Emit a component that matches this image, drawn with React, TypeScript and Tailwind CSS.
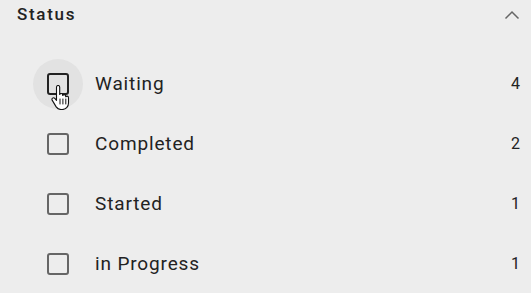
const items = [
  { label: "Waiting", count: 4, hover: true },
  { label: "Completed", count: 2 },
  { label: "Started", count: 1 },
  { label: "in Progress", count: 1 },
];

const HandCursor = () => (
  <svg
    className="absolute left-[18px] top-[26px] w-[19px] h-[25px]"
    viewBox="0 0 19 25"
    fill="none"
  >
    <path
      d="M5.5 2.2c0-1 .7-1.7 1.6-1.7s1.6.7 1.6 1.7v7.3c.3-.7.9-1 1.5-1 .9 0 1.5.7 1.5 1.6v.4c.3-.6.9-.9 1.5-.9.9 0 1.5.7 1.5 1.6v.6c.3-.4.8-.7 1.3-.7.9 0 1.5.7 1.5 1.6v5.2c0 3.8-2.6 6.6-6.3 6.6H10c-2.2 0-3.6-.9-4.8-2.6L1.3 15.4c-.6-.8-.4-1.8.3-2.3.7-.5 1.6-.4 2.2.3l1.7 2V2.2z"
      fill="#fff"
      stroke="#111"
      strokeWidth="1.1"
      strokeLinejoin="round"
    />
    <path d="M9 14v5M11.9 14v5M14.8 14v5" stroke="#111" strokeWidth="1" strokeLinecap="round" />
  </svg>
);

export default function App() {
  return (
    <div
      className="w-[531px] h-[293px] bg-[#ededed] overflow-hidden"
      style={{ fontFamily: "Roboto, 'Liberation Sans', sans-serif" }}
    >
      <div className="flex items-center justify-between h-[30px] pl-[17px] pr-[11px]">
        <span className="text-[17px] font-medium tracking-[0.1em] text-[#222]">Status</span>
        <svg width="16" height="10" viewBox="0 0 16 10" fill="none">
          <path d="M1.5 8.5 8 2l6.5 6.5" stroke="#666" strokeWidth="1.5" />
        </svg>
      </div>
      <div className="pt-[24px] flex flex-col">
        {items.map((it) => (
          <div key={it.label} className="flex items-center h-[60px] pl-[33px] pr-[11px]">
            <div
              className={`relative w-[50px] h-[50px] rounded-full flex items-center justify-center ${
                it.hover ? "bg-[#e2e2e2]" : ""
              }`}
            >
              <div
                className={`w-[22px] h-[22px] rounded-[3px] border-2 ${
                  it.hover ? "border-[#222]" : "border-[#666]"
                }`}
              />
              {it.hover && <HandCursor />}
            </div>
            <span className="ml-[12px] text-[19px] text-[#222] tracking-[0.045em]">{it.label}</span>
            <span className="ml-auto text-[16px] text-[#222]">{it.count}</span>
          </div>
        ))}
      </div>
    </div>
  );
}
